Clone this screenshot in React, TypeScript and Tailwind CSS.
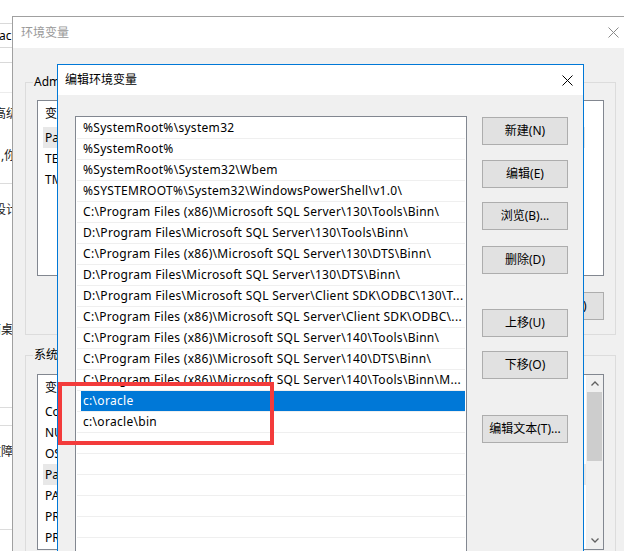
import React from 'react';

const pathRows = [
  '%SystemRoot%\\system32',
  '%SystemRoot%',
  '%SystemRoot%\\System32\\Wbem',
  '%SYSTEMROOT%\\System32\\WindowsPowerShell\\v1.0\\',
  'C:\\Program Files (x86)\\Microsoft SQL Server\\130\\Tools\\Binn\\',
  'D:\\Program Files\\Microsoft SQL Server\\130\\Tools\\Binn\\',
  'C:\\Program Files (x86)\\Microsoft SQL Server\\130\\DTS\\Binn\\',
  'D:\\Program Files\\Microsoft SQL Server\\130\\DTS\\Binn\\',
  'D:\\Program Files\\Microsoft SQL Server\\Client SDK\\ODBC\\130\\T...',
  'C:\\Program Files (x86)\\Microsoft SQL Server\\Client SDK\\ODBC\\...',
  'C:\\Program Files (x86)\\Microsoft SQL Server\\140\\Tools\\Binn\\',
  'C:\\Program Files (x86)\\Microsoft SQL Server\\140\\DTS\\Binn\\',
  'C:\\Program Files (x86)\\Microsoft SQL Server\\140\\Tools\\Binn\\M...',
  'c:\\oracle',
  'c:\\oracle\\bin',
];

const SELECTED = 13;

const sideButtons = [
  { label: '新建(N)', gap: 'mt-0' },
  { label: '编辑(E)', gap: 'mt-[15px]' },
  { label: '浏览(B)...', gap: 'mt-[14px]' },
  { label: '删除(D)', gap: 'mt-[16px]' },
  { label: '上移(U)', gap: 'mt-[35px]' },
  { label: '下移(O)', gap: 'mt-[14px]' },
  { label: '编辑文本(T)...', gap: 'mt-[36px]' },
];

const userVars = [
  { name: 'Path', value: 'C:\\Users\\Administrator\\AppData\\Local\\Microsoft\\WindowsApps;', active: true },
  { name: 'TEMP', value: '%USERPROFILE%\\AppData\\Local\\Temp' },
  { name: 'TMP', value: '%USERPROFILE%\\AppData\\Local\\Temp' },
];

const systemVars = [
  { name: 'ComSpec', value: 'C:\\Windows\\system32\\cmd.exe' },
  { name: 'NUMBER_OF_PROCESSORS', value: '4' },
  { name: 'OS', value: 'Windows_NT' },
  { name: 'Path', value: 'C:\\Windows\\system32;C:\\Windows;', active: true },
  { name: 'PATHEXT', value: '.COM;.EXE;.BAT;.CMD;.VBS;.VBE;.JS' },
  { name: 'PROCESSOR_ARCHITECTURE', value: 'AMD64' },
  { name: 'PROCESSOR_IDENTIFIER', value: 'Intel64 Family 6' },
];

const CloseIcon = ({ color }: { color: string }) => (
  <svg width="11" height="11" viewBox="0 0 11 11" fill="none">
    <path d="M0.5 0.5L10.5 10.5M10.5 0.5L0.5 10.5" stroke={color} strokeWidth="1" />
  </svg>
);

const Chevron = ({ up }: { up?: boolean }) => (
  <svg width="8" height="5" viewBox="0 0 8 5" fill="none">
    <path d={up ? 'M0.5 4.5L4 1L7.5 4.5' : 'M0.5 0.5L4 4L7.5 0.5'} stroke="#606060" strokeWidth="1.3" />
  </svg>
);

type VarRow = { name: string; value: string; active?: boolean };

const VarList = ({ rows, scroll }: { rows: VarRow[]; scroll?: boolean }) => (
  <div className="flex h-[176px] w-[567px] border border-[#828790] bg-white">
    <div className="flex flex-1 flex-col overflow-hidden">
      <div className="flex h-[26px] shrink-0 items-center pl-[7px]">
        <span className="w-[170px]">变量</span>
        <span>值</span>
      </div>
      {rows.map((r) => (
        <div
          key={r.name}
          className={`ml-[5px] flex h-[21px] shrink-0 items-center whitespace-nowrap pl-[2px] ${
            r.active ? (scroll ? 'bg-[#e8e8e8]' : 'w-[542px] bg-[#e8e8e8]') : ''
          }`}
        >
          <span className="w-[168px]">{r.name}</span>
          <span>{r.value}</span>
        </div>
      ))}
    </div>
    {scroll && (
      <div className="flex w-[17px] flex-col bg-[#f0f0f0]">
        <div className="flex h-[17px] items-center justify-center">
          <Chevron up />
        </div>
        <div className="mx-[1px] h-[69px] bg-[#cdcdcd]" />
        <div className="flex-1" />
        <div className="flex h-[17px] items-center justify-center">
          <Chevron />
        </div>
      </div>
    )}
  </div>
);

const WinButton = ({ label, className = '' }: { label: string; className?: string }) => (
  <div
    className={`flex h-[28px] items-center justify-center whitespace-nowrap border border-[#adadad] bg-[#e1e1e1] ${className}`}
  >
    {label}
  </div>
);

const BackStrip = () => (
  <div className="absolute left-0 top-0 flex h-[551px] w-[12px] flex-col overflow-hidden bg-white text-[#222]">
    <div className="h-[24px] shrink-0 border-b border-[#d9d9d9]" />
    <div className="flex h-[24px] shrink-0 items-center border-b border-[#d9d9d9] whitespace-nowrap">
      <span className="-ml-[1px] text-black">ac</span>
    </div>
    <div className="h-[15px] shrink-0 border-b border-[#d9d9d9]" />
    <div className="h-[30px] shrink-0 border-b border-[#ececec]" />
    <div className="flex h-[91px] shrink-0 flex-col border-b border-[#dcdcdc] pt-[13px] leading-[16px] whitespace-nowrap">
      <span className="-ml-[6px]">高级</span>
      <span className="mt-[26px] ml-[1px]">,你</span>
    </div>
    <div className="flex h-[224px] shrink-0 flex-col border-b border-[#dcdcdc] pt-[18px] leading-[16px] whitespace-nowrap">
      <span className="-ml-[6px]">设计</span>
      <span className="mt-[104px] -ml-[11px]">面桌</span>
    </div>
    <div className="h-[18px] shrink-0 border-b border-[#dcdcdc]" />
    <div className="flex h-[104px] shrink-0 flex-col border-b border-[#dcdcdc] pt-[18px] leading-[16px] whitespace-nowrap">
      <span className="-ml-[11px]">故障</span>
    </div>
    <div className="flex-1" />
  </div>
);

const EnvWindow = () => (
  <div className="absolute left-[12px] top-[16px] flex h-[560px] w-[640px] flex-col border-l border-t border-[#a0a0a0] bg-[#f0f0f0]">
    <div className="flex h-[31px] shrink-0 items-center bg-white pl-[8px]">
      <span className="text-[#999999]">环境变量</span>
      <div className="flex-1" />
      <div className="mr-[33px] flex items-center">
        <CloseIcon color="#8a8a8a" />
      </div>
    </div>
    <div className="flex flex-col px-[12px] pt-[34px]">
      <div className="relative h-[253px] w-[591px] border border-[#dcdcdc] px-[11px] pt-[17px]">
        <span className="absolute left-[7px] top-[-9px] bg-[#f0f0f0] px-[1px] leading-[16px]">
          Administrator 的用户变量(U)
        </span>
        <VarList rows={userVars} />
        <div className="mt-[16px] flex w-[567px] justify-end gap-[8px]">
          <WinButton label="新建(N)..." className="w-[75px]" />
          <WinButton label="编辑(E)..." className="w-[75px]" />
          <WinButton label="删除(D)" className="w-[75px]" />
        </div>
      </div>
      <div className="relative mt-[20px] h-[260px] w-[591px] border border-[#dcdcdc] px-[11px] pt-[18px]">
        <span className="absolute left-[7px] top-[-9px] bg-[#f0f0f0] px-[1px] leading-[16px]">系统变量(S)</span>
        <VarList rows={systemVars} scroll />
      </div>
    </div>
  </div>
);

const EditDialog = () => (
  <div className="absolute left-[57px] top-[64px] flex h-[560px] w-[527px] flex-col border border-[#0078d7] bg-[#f0f0f0]">
    <div className="flex h-[30px] shrink-0 items-center justify-between bg-white pl-[7px] pr-[10px]">
      <span>编辑环境变量</span>
      <CloseIcon color="#000000" />
    </div>
    <div className="flex flex-1 pl-[17px] pt-[21px]">
      <div className="flex w-[392px] flex-col overflow-hidden border border-[#828790] bg-white pt-[1px] tracking-[0.3px]">
        {Array.from({ length: 24 }).map((_, i) => {
          const text = pathRows[i] ?? '';
          const selected = i === SELECTED;
          return (
            <div key={i} className="mx-[1px] flex h-[21px] shrink-0 border-b border-[#efefef]">
              {selected ? (
                <div className="ml-[4px] flex flex-1 items-center bg-[#0078d7] pl-[2px] text-white">{text}</div>
              ) : (
                <div className="flex flex-1 items-center overflow-hidden whitespace-nowrap pl-[6px]">{text}</div>
              )}
            </div>
          );
        })}
      </div>
      <div className="ml-[15px] flex w-[86px] flex-col pt-[1px]">
        {sideButtons.map((b) => (
          <WinButton key={b.label} label={b.label} className={b.gap} />
        ))}
      </div>
    </div>
  </div>
);

export default function App() {
  return (
    <div className="relative h-[551px] w-[624px] overflow-hidden bg-white font-['Noto_Sans','Noto_Sans_CJK_SC',sans-serif] text-[12px] text-black">
      <BackStrip />
      <EnvWindow />
      <EditDialog />
      <div className="absolute left-[58px] top-[382px] h-[63px] w-[216px] border-[4px] border-[#f33b3b]" />
    </div>
  );
}
